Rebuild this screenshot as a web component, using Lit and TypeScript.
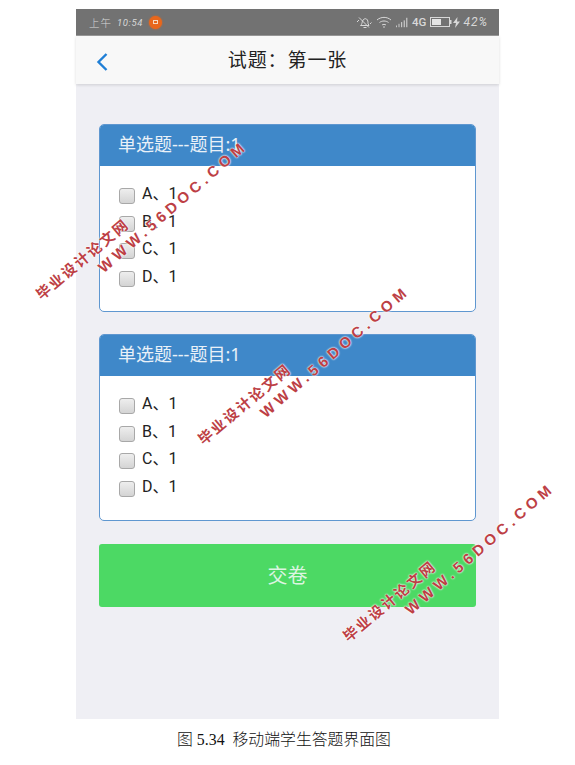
import { LitElement, html, css } from "lit";
import { customElement } from "lit/decorators.js";

@customElement("app-root")
export class AppRoot extends LitElement {
  static styles = css`
    :host { display: block; position: relative; width: 575px; height: 765px; background: #fff; overflow: hidden; font-family: "Roboto", "Noto Sans CJK SC", sans-serif; }
    .page { display: flex; flex-direction: column; align-items: center; padding-top: 9px; }
    .screen { width: 423px; height: 710px; background: #efeff4; display: flex; flex-direction: column; }
    .status { height: 26px; background: #727272; color: #d8d8d8; display: flex; align-items: center; padding: 0 11px 0 13px; font-size: 10px; gap: 6px; border-bottom: 1px solid #9a9a9a; }
    .ampm { font-size: 10.5px; letter-spacing: 1px; font-family: "Noto Sans CJK SC", sans-serif; font-weight: 300; }
    .time { font-style: italic; letter-spacing: .6px; font-size: 9.5px; margin-left: -1px; }
    .dot { width: 13px; height: 13px; border-radius: 50%; background: #e8671c; box-shadow: 0 0 2px #e8671c; display: flex; align-items: center; justify-content: center; }
    .dot i { display: block; width: 5px; height: 4px; border: 1px solid #f6d9c0; box-sizing: border-box; }
    .spacer { flex: 1; }
    .right { display: flex; align-items: center; gap: 4px; }
    .net { font-size: 11.5px; font-weight: 500; }
    .batt { margin-right: -3px; }
    .pct { font-style: italic; font-size: 12px; letter-spacing: 1px; margin-left: -1px; }
    .nav { height: 48px; padding-bottom: 3px; box-sizing: border-box; background: #f8f8f8; box-shadow: 0 1px 3px rgba(0,0,0,.14); display: flex; align-items: center; justify-content: center; position: relative; color: #222; font-size: 19px; letter-spacing: .9px; font-family: "Noto Sans CJK SC", sans-serif; font-weight: 400; }
    .back { position: absolute; left: 20px; top: 16px; }
    .content { padding: 40px 23px 0; display: flex; flex-direction: column; gap: 22px; }
    .card { height: 188px; box-sizing: border-box; background: #fff; border: 1px solid #5f97d0; border-radius: 5px; overflow: hidden; }
    .card + .card { height: 187px; }
    .head { height: 41px; background: #3f88c9; color: #e9f1f8; font-family: "Noto Sans", "Noto Sans CJK SC", sans-serif; font-size: 18px; line-height: 39px; padding-left: 18px; }
    .opts { padding: 15px 0 0 19px; display: flex; flex-direction: column; }
    .opt { height: 27.7px; display: flex; align-items: center; gap: 7px; font-size: 16px; color: #222; }
    .opt span { position: relative; top: -3px; }
    .box { width: 16px; height: 16px; box-sizing: border-box; border: 1px solid #a8a8a8; border-radius: 3px; background: linear-gradient(#eeeeee, #d4d4d4); position: relative; top: 1px; }
    .submit { margin-top: 1px; height: 63px; padding-bottom: 2px; box-sizing: border-box; background: #4cd964; border-radius: 3px; color: #dcf5e1; font-size: 20px; display: flex; align-items: center; justify-content: center; }
    .caption { margin: 10px 7px 0 0; font-size: 15.85px; color: #111; text-align: center; font-family: "Liberation Serif", "Noto Sans CJK SC", serif; font-weight: 300; line-height: 22px; }
    .mark { position: absolute; transform-origin: left bottom; color: #bd3f45; font-weight: 700; white-space: nowrap; text-shadow: 0 0 2px #fff, 0 0 2px #fff; line-height: 1; font-family: "Liberation Sans", "Noto Sans CJK SC", sans-serif; }
    .cn { font-size: 14.5px; letter-spacing: 2.1px; transform: rotate(-40deg); }
    .url { font-size: 15px; letter-spacing: 4.4px; transform: rotate(-41deg); }
  `;

  private card(title: string) {
    return html`<div class="card">
      <div class="head">${title}</div>
      <div class="opts">
        ${["A", "B", "C", "D"].map((l) => html`<div class="opt"><div class="box"></div><span>${l}、1</span></div>`)}
      </div>
    </div>`;
  }

  private mark(x: number, y: number) {
    return html`
      <div class="mark cn" style="left:${x}px;top:${y}px">毕业设计论文网</div>
      <div class="mark url" style="left:${x + 62}px;top:${y - 28}px">WWW.56DOC.COM</div>`;
  }

  render() {
    return html`<div class="page">
        <div class="screen">
          <div class="status">
            <span class="ampm">上午</span><span class="time">10:54</span>
            <div class="dot"><i></i></div>
            <div class="spacer"></div>
            <div class="right">
              <svg width="16" height="14" viewBox="0 0 16 14" fill="none" stroke="#d8d8d8" stroke-width="1">
                <path d="M4.500 10.500c1.500-1 1.500-3 2-4.500s2.500-3 4-2 1.500 3 1.500 4.500l1 2zM7.500 12.500h3M3 2.500l10 10M1 7l2-2M14 9l1.500-1.500"/>
              </svg>
              <svg width="16" height="12" viewBox="0 0 16 12" fill="none" stroke="#d8d8d8" stroke-width="1">
                <path d="M1 4c4-3.500 10-3.500 14 0M3.500 6.500c2.500-2 6.500-2 9 0M6 9c1-.8 3-.8 4 0"/><circle cx="8" cy="11" r=".8" fill="#d8d8d8" stroke="none"/>
              </svg>
              <svg width="12" height="11" viewBox="0 0 14 11" fill="#d8d8d8">
                <rect x="0" y="9" width="1" height="2"/><rect x="3" y="7" width="1" height="4"/><rect x="6" y="5" width="1.200" height="6"/><rect x="9" y="3" width="1.200" height="8"/><rect x="12" y="0" width="1.200" height="11"/>
              </svg>
              <span class="net">4G</span>
              <svg class="batt" width="22" height="10" viewBox="0 0 22 10">
                <rect x=".5" y=".5" width="19" height="9" fill="none" stroke="#d8d8d8"/><rect x="2" y="2" width="9" height="6" fill="#e4e4e4"/><rect x="20" y="3" width="1.500" height="4" fill="#d8d8d8"/>
              </svg>
              <svg width="7" height="11" viewBox="0 0 7 11" fill="#d8d8d8"><path d="M4.500 0 0 6h3l-1 5 5-6.500H4z"/></svg>
              <span class="pct">42%</span>
            </div>
          </div>
          <div class="nav">
            <svg class="back" width="13" height="20" viewBox="0 0 13 20" fill="none" stroke="#1f7fd6" stroke-width="2.400">
              <path d="M10.500 2 2.500 10l8 8"/>
            </svg>
            试题：第一张
          </div>
          <div class="content">
            ${this.card("单选题---题目:1")}
            ${this.card("单选题---题目:1")}
            <div class="submit">交卷</div>
          </div>
        </div>
        <div class="caption">图 5.34&nbsp; 移动端学生答题界面图</div>
      </div>
      ${this.mark(43, 288)}
      ${this.mark(205, 433)}
      ${this.mark(350, 630)}
    `;
  }
}
